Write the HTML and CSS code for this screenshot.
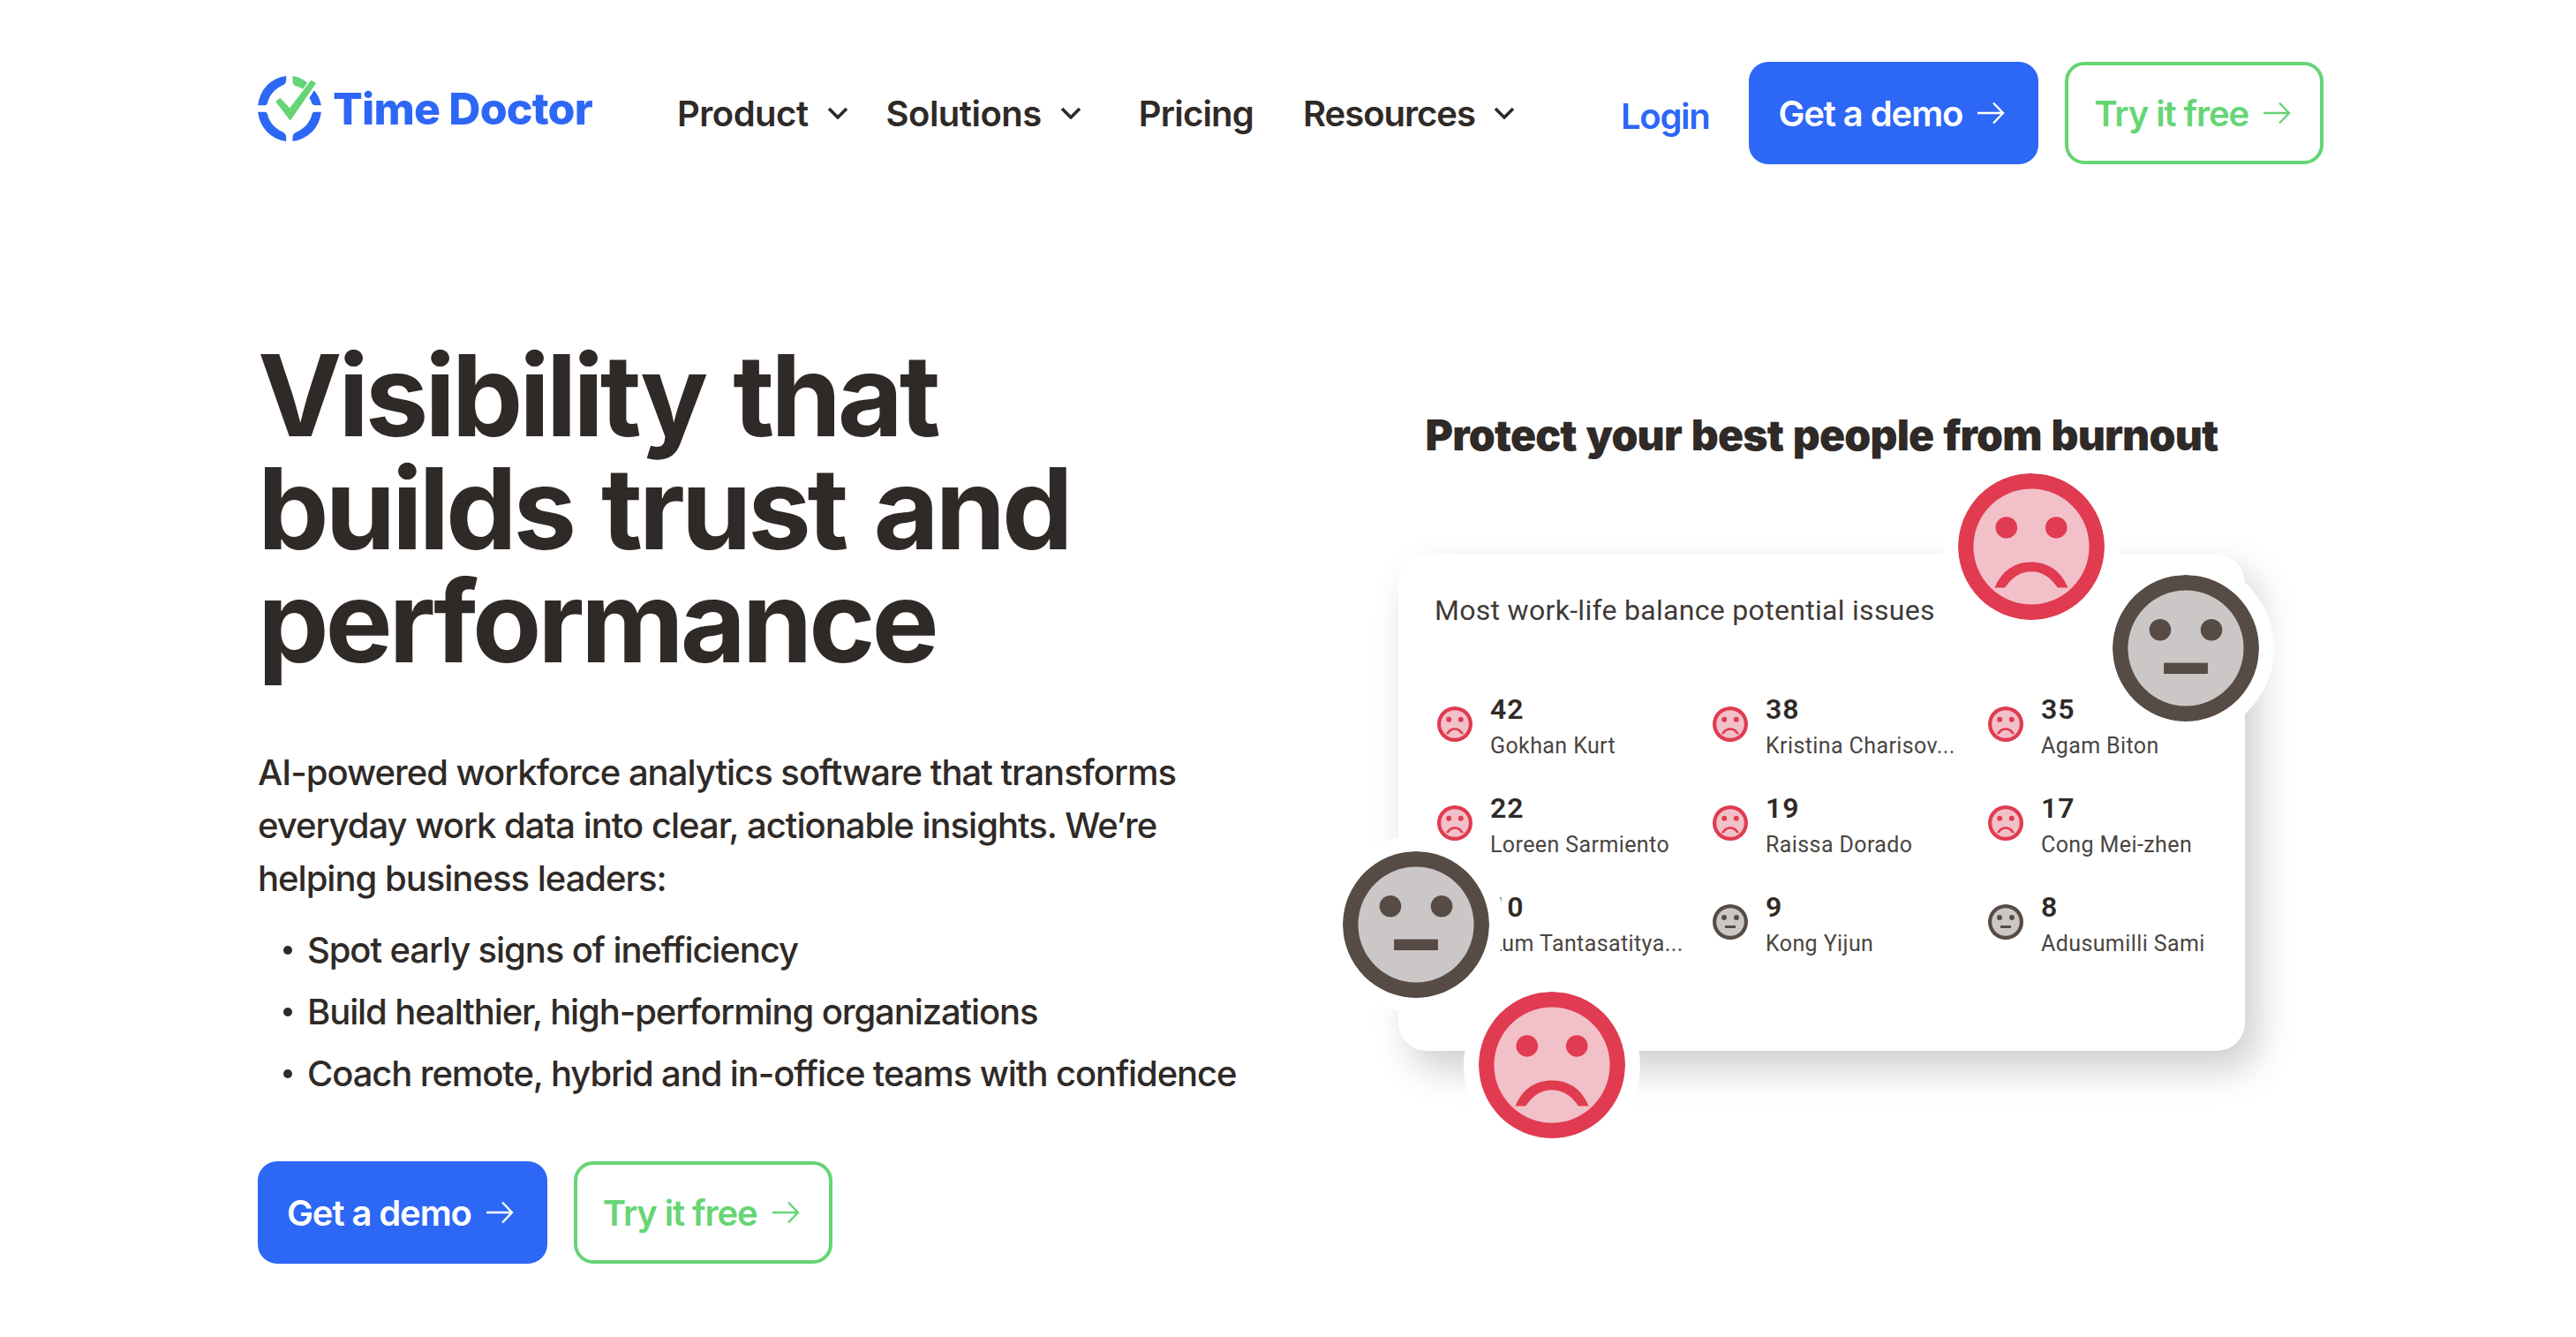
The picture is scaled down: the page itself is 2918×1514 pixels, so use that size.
FILE: index.html
```html
<!DOCTYPE html>
<html lang="en">
<head>
    <meta charset="UTF-8">
    <title>Time Doctor</title>
    <link rel="stylesheet" href="styles.css">
</head>
<body>
    <svg class="defs" width="0" height="0">
        <symbol id="sad" viewBox="0 0 100 100">
            <circle cx="50" cy="50" r="50" fill="#e03b50"/>
            <circle cx="50" cy="50" r="39.5" fill="#f2c0c9"/>
            <circle cx="33" cy="37" r="7.4" fill="#e03b50"/>
            <circle cx="67" cy="37" r="7.4" fill="#e03b50"/>
            <path d="M25 78C30 66 39 60.500 50 60.500C61 60.500 70 66 75 78L68 78C63 70.500 57 67 50 67C43 67 37 70.500 32 78Z" fill="#e03b50"/>
        </symbol>
        <symbol id="meh" viewBox="0 0 100 100">
            <circle cx="50" cy="50" r="50" fill="#564b45"/>
            <circle cx="50" cy="50" r="39.500" fill="#cbc7c6"/>
            <circle cx="32.500" cy="37.500" r="7.400" fill="#564b45"/>
            <circle cx="67.500" cy="37.500" r="7.400" fill="#564b45"/>
            <rect x="35" y="60" width="30" height="7.500" fill="#564b45"/>
        </symbol>
        <symbol id="arrow" viewBox="0 0 32 26">
            <path d="M1 13H30M19 1.500L30 13L19 24.500" fill="none" stroke="currentColor" stroke-width="2.400"/>
        </symbol>
        <symbol id="chevron" viewBox="0 0 24 14">
            <path d="M2 2L12 12L22 2" fill="none" stroke="currentColor" stroke-width="3.600"/>
        </symbol>
    </svg>

    <nav class="navbar">
        <a class="logo" href="#">
            <svg class="logo-mark" viewBox="37 48 215 222">
                <path fill="#2d67f6" d="M133 48A108 111 0 0 0 37 148L60 148Q68 148 70 138C76 112 95 92 120 80Q133 74 133 62Z"/>
                <path fill="#2d67f6" d="M133 270A108 111 0 0 1 37 170L60 170Q68 170 70 180C76 206 95 226 120 238Q133 244 133 256Z"/>
                <path fill="#2d67f6" d="M155 270A108 111 0 0 0 252 170L230 170Q222 170 220 180C214 206 195 226 170 238Q155 244 155 256Z"/>
                <path fill="#2d67f6" d="M228 97A108 111 0 0 1 252 148L232 148Q222 148 218 135L212 122Z"/>
                <path fill="#66d575" d="M155 48Q185 52 205 72L190 92Q175 85 165 82Q155 78 155 65Z"/>
                <path fill="#66d575" d="M97 135L112 122L145 157L218 62L235 72L147 200Z"/>
            </svg>
            <span class="logo-text">Time Doctor</span>
        </a>
        <div class="nav-links">
            <a class="nav-link nav-product" href="#">Product <svg class="chevron"><use href="#chevron"/></svg></a>
            <a class="nav-link nav-solutions" href="#">Solutions <svg class="chevron"><use href="#chevron"/></svg></a>
            <a class="nav-link nav-pricing" href="#">Pricing</a>
            <a class="nav-link nav-resources" href="#">Resources <svg class="chevron"><use href="#chevron"/></svg></a>
        </div>
        <div class="nav-actions">
            <a class="login" href="#">Login</a>
            <a class="btn btn-blue" href="#">Get a demo <svg class="arrow"><use href="#arrow"/></svg></a>
            <a class="btn btn-green" href="#">Try it free <svg class="arrow"><use href="#arrow"/></svg></a>
        </div>
    </nav>

    <main class="hero">
        <section class="hero-left">
            <h1>Visibility that builds trust and performance</h1>
            <p class="description">AI-powered workforce analytics software that transforms everyday work data into clear, actionable insights. We’re helping business leaders:</p>
            <ul class="points">
                <li>Spot early signs of inefficiency</li>
                <li>Build healthier, high-performing organizations</li>
                <li>Coach remote, hybrid and in-office teams with confidence</li>
            </ul>
            <div class="hero-buttons">
                <a class="btn btn-blue" href="#">Get a demo <svg class="arrow"><use href="#arrow"/></svg></a>
                <a class="btn btn-green" href="#">Try it free <svg class="arrow"><use href="#arrow"/></svg></a>
            </div>
        </section>

        <section class="hero-right">
            <h2>Protect your best people from burnout</h2>
            <div class="card">
                <h3>Most work-life balance potential issues</h3>
                <div class="people">
                    <div class="person"><svg class="face"><use href="#sad"/></svg><div><b>42</b><span>Gokhan Kurt</span></div></div>
                    <div class="person"><svg class="face"><use href="#sad"/></svg><div><b>38</b><span>Kristina Charisov...</span></div></div>
                    <div class="person"><svg class="face"><use href="#sad"/></svg><div><b>35</b><span>Agam Biton</span></div></div>
                    <div class="person"><svg class="face"><use href="#sad"/></svg><div><b>22</b><span>Loreen Sarmiento</span></div></div>
                    <div class="person"><svg class="face"><use href="#sad"/></svg><div><b>19</b><span>Raissa Dorado</span></div></div>
                    <div class="person"><svg class="face"><use href="#sad"/></svg><div><b>17</b><span>Cong Mei-zhen</span></div></div>
                    <div class="person"><svg class="face"><use href="#meh"/></svg><div><b>10</b><span>Lum Tantasatitya...</span></div></div>
                    <div class="person"><svg class="face"><use href="#meh"/></svg><div><b>9</b><span>Kong Yijun</span></div></div>
                    <div class="person"><svg class="face"><use href="#meh"/></svg><div><b>8</b><span>Adusumilli Sami</span></div></div>
                </div>
                <svg class="big-face big-sad-top"><use href="#sad"/></svg>
                <svg class="big-face big-meh-right"><use href="#meh"/></svg>
                <svg class="big-face big-meh-left"><use href="#meh"/></svg>
                <svg class="big-face big-sad-bottom"><use href="#sad"/></svg>
            </div>
        </section>
    </main>
</body>
</html>
```

FILE: styles.css
```css
* {
    box-sizing: border-box;
    margin: 0;
    padding: 0;
}

body {
    font-family: 'Inter', sans-serif;
    background-color: #fff;
    color: #2f2a27;
    width: 2918px;
    padding: 70px 286px 0 292px;
}

a {
    text-decoration: none;
    color: inherit;
}

.defs {
    position: absolute;
}

.navbar {
    display: flex;
    align-items: center;
    height: 116px;
}

.logo {
    display: flex;
    align-items: center;
    width: 475px;
    margin-top: -11px;
}

.logo-mark {
    width: 72px;
    height: 74px;
}

.logo-text {
    margin-left: 13px;
    font-size: 50px;
    font-weight: 800;
    letter-spacing: -0.8px;
    color: #2d67f6;
}

.nav-links {
    display: flex;
    align-items: center;
    font-size: 40px;
    font-weight: 600;
    letter-spacing: -0.5px;
}

.nav-link {
    display: flex;
    align-items: center;
    gap: 21px;
}

.nav-solutions {
    margin-left: 43px;
}

.nav-pricing {
    margin-left: 65px;
    letter-spacing: -0.8px;
}

.nav-resources {
    margin-left: 56px;
    letter-spacing: -1px;
}

.chevron {
    width: 24px;
    height: 14px;
}

.nav-actions {
    display: flex;
    align-items: center;
    margin-left: auto;
}

.login {
    margin-top: 6px;
    margin-right: 45px;
    font-size: 40px;
    font-weight: 600;
    letter-spacing: -1.300px;
    color: #2d67f6;
}

.btn {
    display: inline-flex;
    align-items: center;
    gap: 16px;
    height: 116px;
    padding: 0 38px 0 33px;
    border-radius: 22px;
    font-size: 40px;
    font-weight: 600;
    letter-spacing: -1.100px;
    white-space: nowrap;
}

.btn-blue {
    background: #2d67f6;
    color: #fff;
}

.btn-green {
    margin-left: 30px;
    border: 4px solid #66d575;
    color: #66d575;
    padding: 0 33px 0 29px;
}

.arrow {
    width: 32px;
    height: 26px;
}

.hero {
    display: flex;
    margin-top: 198px;
}

.hero-left {
    width: 1292px;
    flex-shrink: 0;
}

h1 {
    width: 1000px;
    font-size: 128px;
    line-height: 128px;
    font-weight: 700;
    letter-spacing: -4.200px;
    word-spacing: 6px;
}

.description {
    width: 1120px;
    margin-top: 77px;
    font-size: 40px;
    line-height: 60px;
    font-weight: 450;
    letter-spacing: -1px;
}

.points {
    margin-top: 16px;
    padding-left: 29px;
    list-style: none;
    font-size: 40px;
    line-height: 70px;
    font-weight: 450;
    letter-spacing: -1.100px;
}

.points li {
    display: flex;
    align-items: center;
}

.points li::before {
    content: '';
    width: 10px;
    height: 10px;
    margin-right: 17px;
    border-radius: 50%;
    background: #2f2a27;
}

.hero-buttons {
    display: flex;
    margin-top: 64px;
}

.hero-right {
    width: 959px;
    padding-top: 79px;
}

h2 {
    font-size: 48px;
    line-height: 60px;
    font-weight: 900;
    letter-spacing: -0.8px;
    word-spacing: 2px;
    text-align: center;
    white-space: nowrap;
}

.card {
    position: relative;
    height: 562px;
    margin-top: 105px;
    padding: 40px 41px;
    background: #fff;
    border-radius: 32px;
    box-shadow: 14px 20px 44px rgba(0, 0, 0, 0.2);
    font-family: 'Roboto', sans-serif;
}

h3 {
    font-size: 32px;
    line-height: 46px;
    font-weight: 400;
    letter-spacing: 0.3px;
    color: #3f3a37;
}

.people {
    display: grid;
    grid-template-columns: repeat(3, 312px);
    grid-auto-rows: 112px;
    margin-top: 50px;
    margin-left: 3px;
}

.person {
    display: flex;
    align-items: center;
    gap: 20px;
}

.person div {
    display: flex;
    flex-direction: column;
    padding-top: 3px;
}

.person b {
    font-size: 32px;
    line-height: 46px;
    font-weight: 600;
    letter-spacing: 1px;
}

.person span {
    font-size: 25px;
    line-height: 38px;
    letter-spacing: 0.4px;
    color: #4a4542;
}

.face {
    width: 40px;
    height: 40px;
    flex-shrink: 0;
}

.big-face {
    position: absolute;
    width: 166px;
    height: 166px;
    border-radius: 50%;
    box-shadow: 0 0 0 17px #fff;
}

.big-sad-top {
    left: 634px;
    top: -92px;
}

.big-meh-right {
    left: 809px;
    top: 23px;
}

.big-meh-left {
    left: -63px;
    top: 336px;
}

.big-sad-bottom {
    left: 91px;
    top: 495px;
}
```
